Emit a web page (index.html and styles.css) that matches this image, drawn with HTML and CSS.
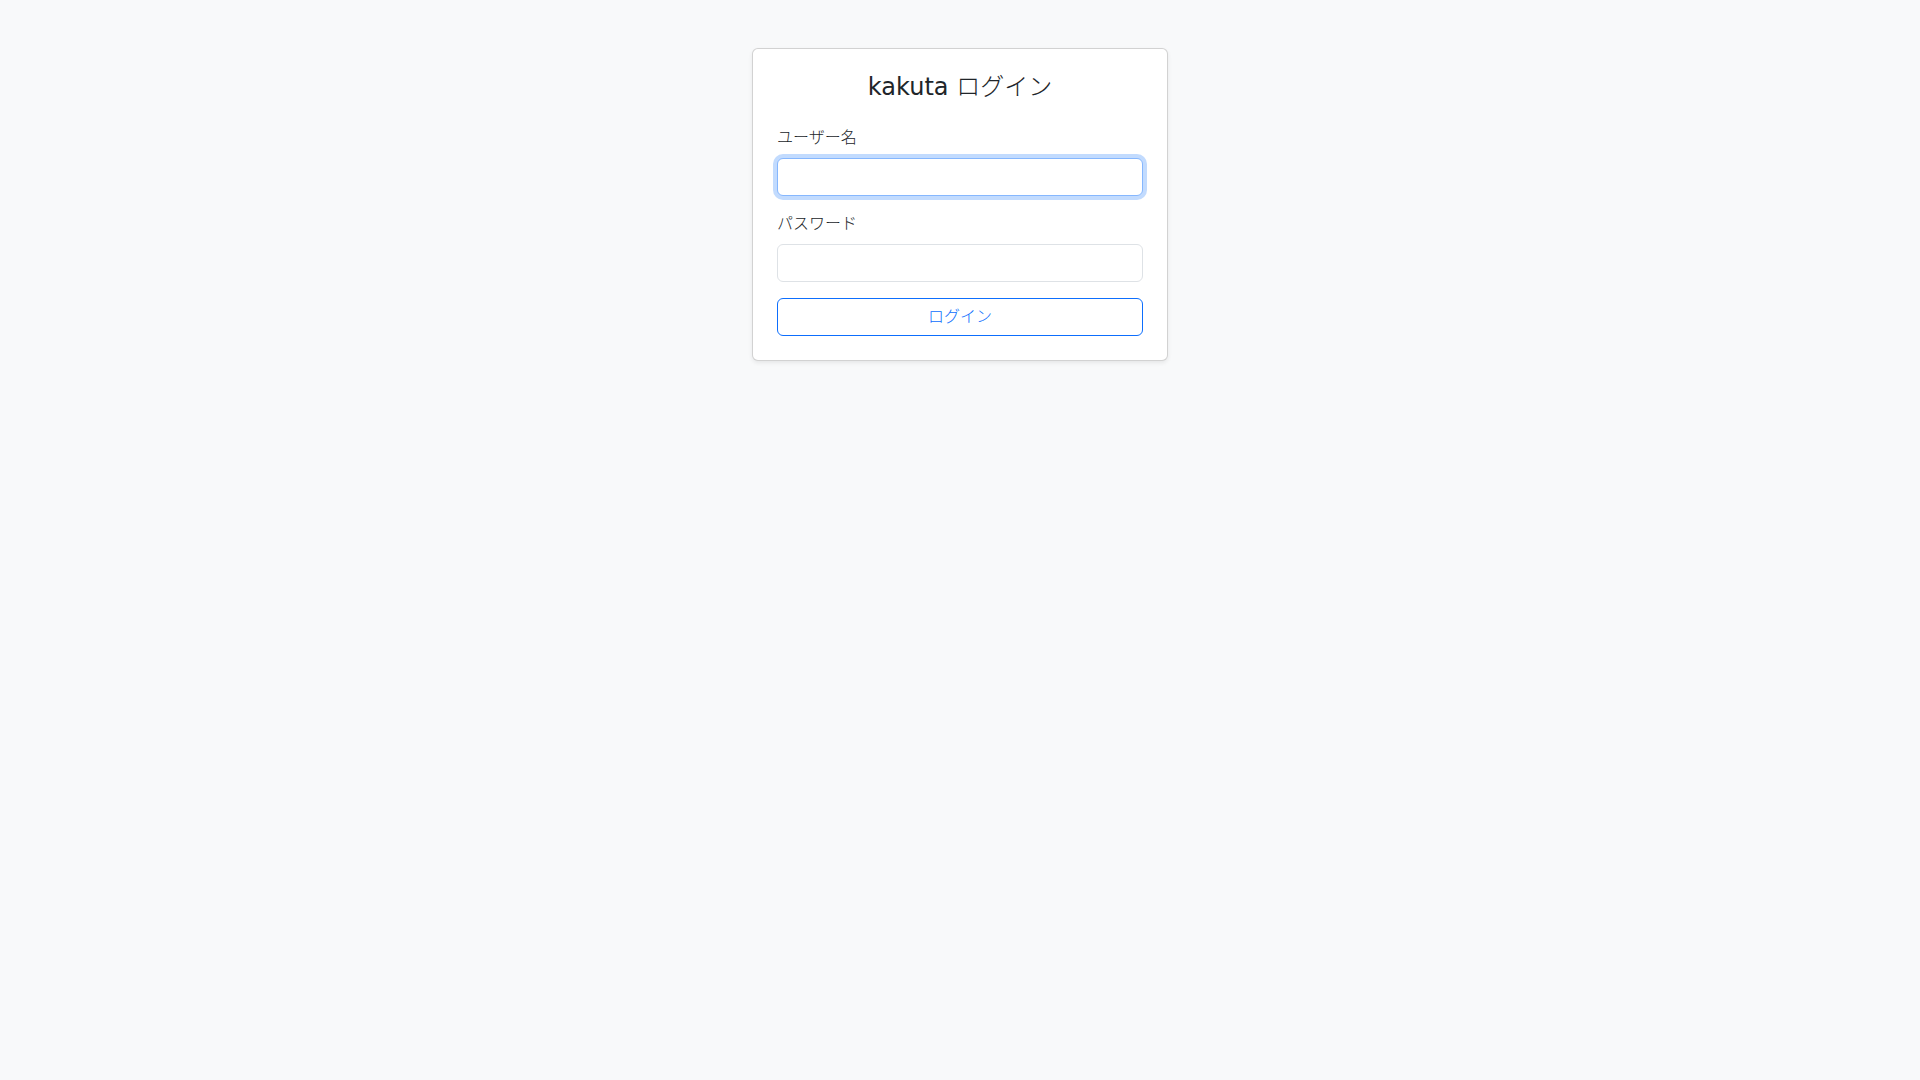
FILE: index.html
```html
<!DOCTYPE html>
<html lang="ja">
<head>
<meta charset="utf-8">
<title>kakuta ログイン</title>
<link rel="stylesheet" href="styles.css">
</head>
<body>
<div class="container">
  <div class="row">
    <div class="col">
      <div class="card">
        <div class="card-body">
          <h4 class="title">kakuta <span class="ja">ログイン</span></h4>
          <form class="login-form">
            <div class="field">
              <label class="form-label" for="username"><span class="ja">ユーザー名</span></label>
              <input class="form-control focused" id="username" type="text">
            </div>
            <div class="field">
              <label class="form-label" for="password"><span class="ja">パスワード</span></label>
              <input class="form-control" id="password" type="password">
            </div>
            <button class="btn-outline" type="submit"><span class="ja">ログイン</span></button>
          </form>
        </div>
      </div>
    </div>
  </div>
</div>
</body>
</html>
```
FILE: styles.css
```css
* { box-sizing: border-box; }
html, body { margin: 0; padding: 0; }
body {
  background: #f8f9fa;
  color: #212529;
  font-family: "DejaVu Sans", "Noto Sans CJK JP", sans-serif;
  font-size: 16px;
  line-height: 1.5;
  min-height: 1080px;
}
.ja {
  font-weight: 300;
}
.container {
  max-width: 1320px;
  margin: 0 auto;
  padding: 0 12px;
}
.row {
  display: flex;
  justify-content: center;
  margin: 0 -12px;
}
.col {
  width: 440px;
  flex: 0 0 440px;
  padding: 0 12px;
  margin-top: 48px;
}
.card {
  background: #fff;
  border: 1px solid rgba(0,0,0,0.175);
  border-radius: 6px;
  box-shadow: 0 2px 4px rgba(0,0,0,0.075);
}
.card-body { padding: 24px; }
.title {
  margin: 0 0 24px;
  font-size: 24px;
  font-weight: 400;
  line-height: 1.2;
  text-align: center;
}
.field { margin-bottom: 16px; }
.form-label {
  display: block;
  margin-bottom: 8px;
  font-size: 16px;
}
.form-control {
  display: block;
  width: 100%;
  height: 38px;
  padding: 6px 12px;
  font-size: 16px;
  font-family: inherit;
  color: #212529;
  background: #fff;
  border: 1px solid #dee2e6;
  border-radius: 6px;
  outline: none;
}
.form-control.focused {
  border-color: #86b7fe;
  box-shadow: 0 0 0 4px rgba(13,110,253,0.25);
}
.btn-outline {
  display: block;
  width: 100%;
  height: 38px;
  padding: 6px 12px;
  font-family: inherit;
  font-size: 16px;
  line-height: 1.5;
  color: #0d6efd;
  background: transparent;
  border: 1px solid #0d6efd;
  border-radius: 6px;
  cursor: pointer;
}
```
